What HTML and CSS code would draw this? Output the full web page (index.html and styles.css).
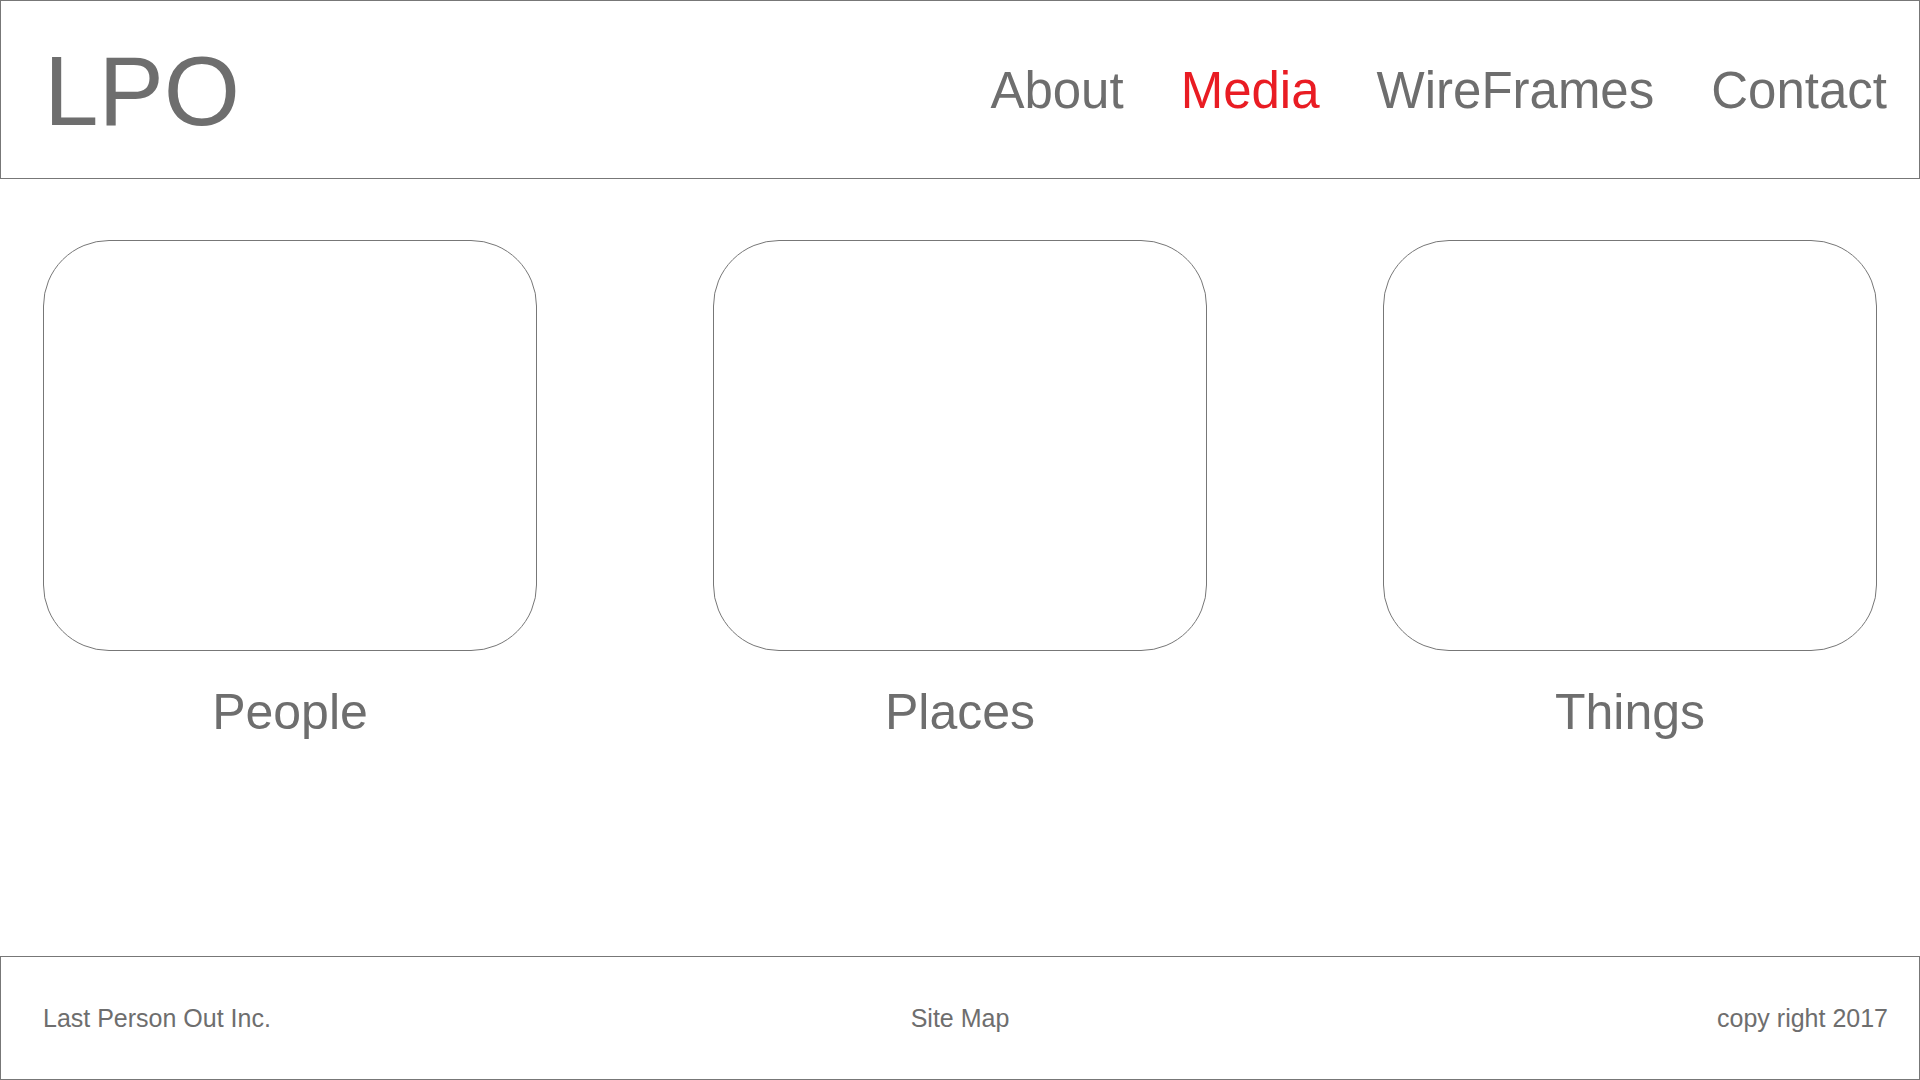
FILE: index.html
```html
<!DOCTYPE html>
<html lang="en">
<head>
<meta charset="utf-8">
<title>LPO - Media</title>
<link rel="stylesheet" href="styles.css">
</head>
<body>
<header class="site-header">
  <div class="logo">LPO</div>
  <nav class="nav">
    <a class="nav-link" href="#">About</a>
    <a class="nav-link active" href="#">Media</a>
    <a class="nav-link" href="#">WireFrames</a>
    <a class="nav-link" href="#">Contact</a>
  </nav>
</header>
<main class="content">
  <div class="card">
    <div class="card-box"></div>
    <div class="card-label">People</div>
  </div>
  <div class="card">
    <div class="card-box"></div>
    <div class="card-label">Places</div>
  </div>
  <div class="card">
    <div class="card-box"></div>
    <div class="card-label">Things</div>
  </div>
</main>
<footer class="site-footer">
  <div class="foot-left">Last Person Out Inc.</div>
  <div class="foot-mid">Site Map</div>
  <div class="foot-right">copy right 2017</div>
</footer>
</body>
</html>
```
FILE: styles.css
```css
* { box-sizing: border-box; }
html, body { margin: 0; padding: 0; }
body {
  width: 1920px;
  height: 1080px;
  display: flex;
  flex-direction: column;
  font-family: "Liberation Sans", Arial, sans-serif;
  color: #6e6e6e;
  background: #fff;
  overflow: hidden;
}
.site-header {
  height: 179px;
  border: 1px solid #777;
  display: flex;
  align-items: center;
  justify-content: space-between;
  padding: 2px 32px 0 43px;
}
.logo {
  font-size: 98px;
  line-height: 1;
}
.nav {
  display: flex;
  gap: 57px;
}
.nav-link {
  font-size: 51px;
  line-height: 1;
  color: #6e6e6e;
  text-decoration: none;
}
.nav-link.active { color: #e91c23; }
.content {
  flex: 1;
  display: flex;
  justify-content: space-between;
  align-items: flex-start;
  padding: 61px 43px 0 43px;
}
.card {
  width: 494px;
  display: flex;
  flex-direction: column;
  align-items: center;
}
.card-box {
  width: 494px;
  height: 411px;
  border: 1px solid #777;
  border-radius: 66px;
}
.card-label {
  margin-top: 36px;
  font-size: 50px;
  line-height: 1;
}
.site-footer {
  height: 124px;
  border: 1px solid #777;
  display: grid;
  grid-template-columns: 1fr auto 1fr;
  align-items: center;
  padding: 0 31px;
  font-size: 25px;
  line-height: 1;
}
.foot-left { justify-self: start; padding-left: 11px; }
.foot-mid { justify-self: center; }
.foot-right { justify-self: end; }
```
